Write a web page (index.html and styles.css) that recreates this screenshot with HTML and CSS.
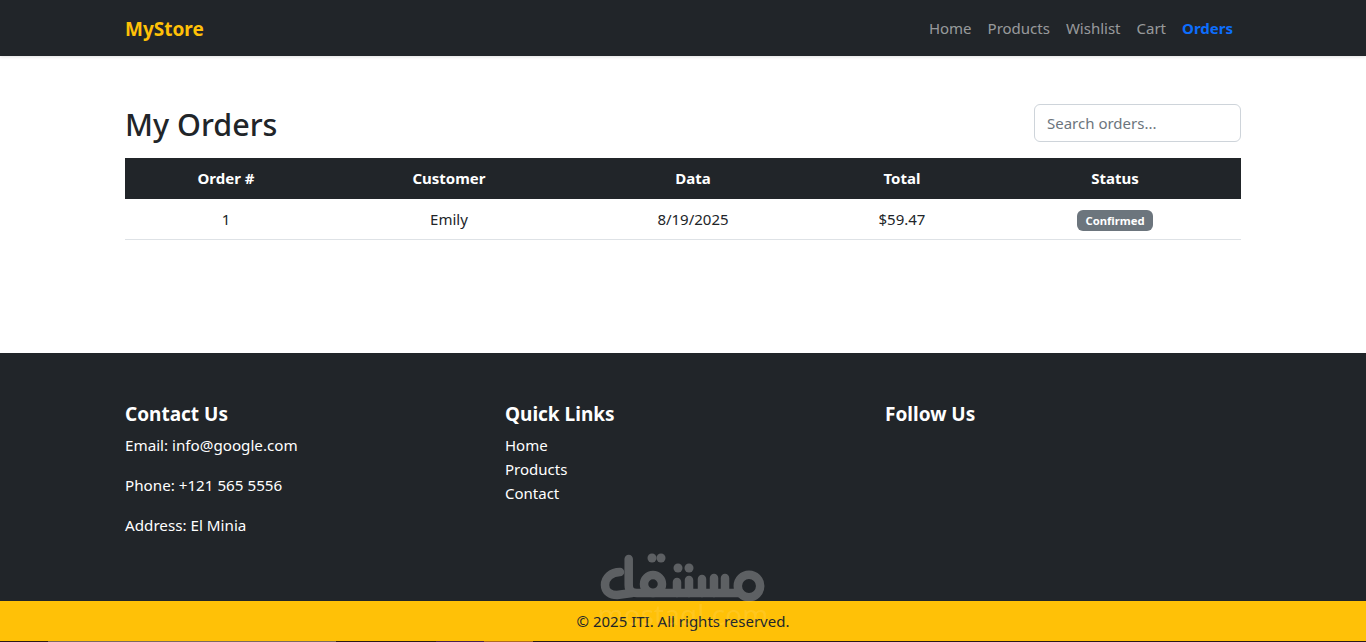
FILE: index.html
```html
<!DOCTYPE html>
<html lang="en">
<head>
    <meta charset="UTF-8">
    <meta name="viewport" content="width=device-width, initial-scale=1.0">
    <title>My Orders</title>
    <link rel="stylesheet" href="styles.css">
</head>
<body>
    <nav class="navbar">
        <div class="container navbar-inner">
            <a class="brand" href="#">MyStore</a>
            <ul class="nav-links">
                <li><a href="#">Home</a></li>
                <li><a href="#">Products</a></li>
                <li><a href="#">Wishlist</a></li>
                <li><a href="#">Cart</a></li>
                <li><a class="active" href="#">Orders</a></li>
            </ul>
        </div>
    </nav>

    <main class="container orders">
        <div class="orders-head">
            <h2 class="orders-title">My Orders</h2>
            <input class="search" type="text" placeholder="Search orders...">
        </div>
        <table class="orders-table">
            <thead>
                <tr>
                    <th class="col-id">Order #</th>
                    <th class="col-customer">Customer</th>
                    <th class="col-date">Data</th>
                    <th class="col-total">Total</th>
                    <th class="col-status">Status</th>
                </tr>
            </thead>
            <tbody>
                <tr>
                    <td>1</td>
                    <td>Emily</td>
                    <td>8/19/2025</td>
                    <td>$59.47</td>
                    <td><span class="badge">Confirmed</span></td>
                </tr>
            </tbody>
        </table>
    </main>

    <footer class="footer">
        <div class="container footer-cols">
            <div class="footer-col">
                <h5>Contact Us</h5>
                <p>Email: info@google.com</p>
                <p>Phone: +121 565 5556</p>
                <p>Address: El Minia</p>
            </div>
            <div class="footer-col">
                <h5>Quick Links</h5>
                <ul class="footer-links">
                    <li><a href="#">Home</a></li>
                    <li><a href="#">Products</a></li>
                    <li><a href="#">Contact</a></li>
                </ul>
            </div>
            <div class="footer-col">
                <h5>Follow Us</h5>
            </div>
        </div>
    </footer>
    <div class="copyright">© 2025 ITI. All rights reserved.</div>
    <div class="page-edge"></div>

    <!-- watermark sits over the footer -->
    <div class="watermark">
        <svg class="watermark-logo" width="166" height="50" viewBox="0 0 166 50" fill="none" stroke="#fff" stroke-width="8.5" stroke-linecap="round" stroke-linejoin="round">
            <path d="M28.7 6 V32 Q28.7 40 37 40 H140"/>
            <path d="M20 19 C11 19 5 25 5 32 C5 39 11 42 17 42 L32 40"/>
            <circle cx="53" cy="31" r="9"/>
            <path d="M77 29 V40 M89 27 V40 M102 26 V40 M114 25 V40 M125 25 V38"/>
            <circle cx="149" cy="33" r="11.2"/>
            <circle cx="52" cy="5" r="4.5" fill="#fff" stroke="none"/>
            <circle cx="61" cy="5" r="4.5" fill="#fff" stroke="none"/>
            <circle cx="78" cy="15" r="4.5" fill="#fff" stroke="none"/>
            <circle cx="89" cy="15" r="4.5" fill="#fff" stroke="none"/>
        </svg>
        <span class="watermark-url">mostaql.com</span>
    </div>
</body>
</html>
```

FILE: styles.css
```css
* {
    box-sizing: border-box;
}
body {
    margin: 0;
    position: relative;
    font-family: "Noto Sans", "Open Sans", Arial, sans-serif;
    font-size: 15px;
    line-height: 24px;
    color: #212529;
    background-color: #fff;
}
a {
    text-decoration: none;
    color: inherit;
}
ul {
    list-style: none;
    margin: 0;
    padding: 0;
}
.container {
    width: 1140px;
    margin: 0 auto;
    padding: 0 12px;
}

.navbar {
    height: 56px;
    background-color: #212529;
    box-shadow: 0 1px 3px rgba(0, 0, 0, 0.12);
}
.navbar-inner {
    height: 100%;
    display: flex;
    justify-content: space-between;
    align-items: center;
}
.brand {
    font-size: 19px;
    font-weight: 700;
    color: #ffc107;
    padding-top: 2px;
}
.nav-links {
    display: flex;
    gap: 16px;
    padding-right: 8px;
    color: rgba(255, 255, 255, 0.55);
}
.nav-links .active {
    color: #0d6efd;
    font-weight: 700;
}

.orders {
    padding-top: 48px;
    height: 297px;
}
.orders-head {
    display: flex;
    justify-content: space-between;
    align-items: center;
    margin-bottom: 16px;
}
.orders-title {
    margin: 0;
    font-size: 30.5px;
    line-height: 38px;
    font-weight: 500;
    transform: translateY(1px);
}
.search {
    width: 207px;
    height: 38px;
    padding: 6px 12px;
    border: 1px solid #ced4da;
    border-radius: 6px;
    font-family: inherit;
    font-size: 15px;
    color: #212529;
    outline: none;
}
.search::placeholder {
    color: #6c757d;
}

.orders-table {
    width: 100%;
    border-collapse: separate;
    border-spacing: 0;
    table-layout: fixed;
    text-align: center;
}
.orders-table th {
    height: 41px;
    padding: 6px 8px 8px;
    background-color: #212529;
    color: #fff;
    font-weight: 700;
}
.orders-table td {
    height: 41px;
    padding: 8px;
    border-bottom: 1px solid #dee2e6;
}
.col-id { width: 202px; }
.col-customer { width: 244px; }
.col-date { width: 244px; }
.col-total { width: 174px; }
.col-status { width: 252px; }
.badge {
    display: inline-block;
    padding: 4px 8px;
    border-radius: 6px;
    background-color: #6c757d;
    color: #fff;
    font-size: 11.25px;
    line-height: 13px;
    font-weight: 700;
    vertical-align: middle;
}

.footer {
    height: 248px;
    padding-top: 48px;
    background-color: #212529;
    color: #fff;
}
.footer-cols {
    display: grid;
    grid-template-columns: repeat(3, 380px);
}
.footer-col h5 {
    margin: 0 0 6px;
    font-size: 19px;
    line-height: 26px;
    font-weight: 700;
}
.footer-col p {
    margin: 0 0 16px;
    font-size: 15.2px;
}
.copyright {
    height: 40px;
    background-color: #ffc107;
    text-align: center;
    line-height: 40px;
}
.page-edge {
    height: 1px;
    background: linear-gradient(90deg, #2a1a1a 48px, #7b6a60 48px 336px, #2a1a1a 336px 436px, #4a2050 436px 484px, #b06a20 484px 533px, #2a1a1a 533px);
}

.watermark {
    position: absolute;
    left: 600px;
    top: 553px;
    width: 166px;
    display: flex;
    flex-direction: column;
    align-items: center;
    pointer-events: none;
}
.watermark-logo {
    display: block;
    opacity: 0.27;
}
.watermark-url {
    margin-top: -4px;
    font-size: 28px;
    line-height: 30px;
    white-space: nowrap;
    color: rgba(255, 255, 255, 0.1);
}
```
